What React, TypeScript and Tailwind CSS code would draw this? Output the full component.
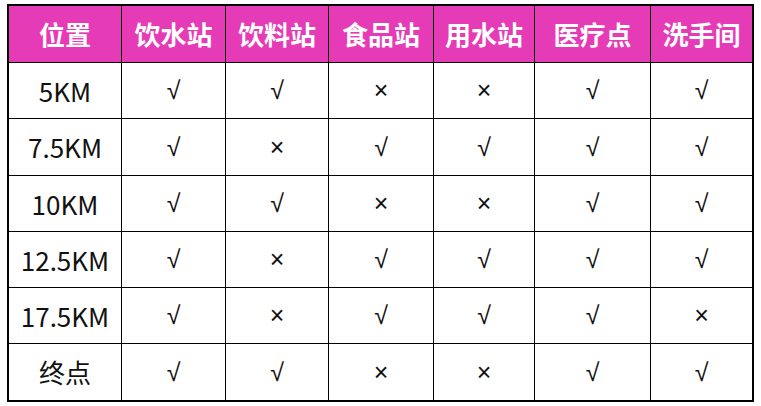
import React from "react";

const cols = ["w-[113px]", "w-[104px]", "w-[103px]", "w-[105px]", "w-[101px]", "w-[116px]", "w-[101px]"];
const heads = ["位置", "饮水站", "饮料站", "食品站", "用水站", "医疗点", "洗手间"];
const rows: { h: string; name: string; v: string[] }[] = [
  { h: "h-[56px]", name: "5KM", v: ["√", "√", "×", "×", "√", "√"] },
  { h: "h-[57px]", name: "7.5KM", v: ["√", "×", "√", "√", "√", "√"] },
  { h: "h-[56px]", name: "10KM", v: ["√", "√", "×", "×", "√", "√"] },
  { h: "h-[56px]", name: "12.5KM", v: ["√", "×", "√", "√", "√", "√"] },
  { h: "h-[56px]", name: "17.5KM", v: ["√", "×", "√", "√", "√", "×"] },
  { h: "h-[56px]", name: "终点", v: ["√", "√", "×", "×", "√", "√"] },
];

export default function App() {
  return (
    <div className="w-[761px] h-[406px] bg-white pt-[4px] pl-[7px] font-['Noto_Sans_CJK_SC','Noto_Sans',sans-serif]">
      <div className="w-[747px] h-[398px] border-2 border-black flex flex-col">
        <div className="flex h-[57px] bg-[#e63bb7] border-b border-black">
          {heads.map((t, i) => (
            <div
              key={i}
              className={`${cols[i]} ${i < 6 ? "border-r border-black" : ""} flex items-center justify-center text-white font-bold text-[26px] leading-none`}
            >
              {t}
            </div>
          ))}
        </div>
        {rows.map((r, ri) => (
          <div key={ri} className={`flex ${r.h} ${ri < rows.length - 1 ? "border-b border-black" : ""}`}>
            <div className={`${cols[0]} border-r border-black flex items-center justify-center text-[26px] text-[#111] leading-none`}>
              {r.name}
            </div>
            {r.v.map((c, ci) => (
              <div
                key={ci}
                className={`${cols[ci + 1]} ${ci < 5 ? "border-r border-black" : ""} flex items-center justify-center text-[25px] text-[#111] leading-none font-['Liberation_Sans',sans-serif]`}
              >
                {c}
              </div>
            ))}
          </div>
        ))}
      </div>
    </div>
  );
}
